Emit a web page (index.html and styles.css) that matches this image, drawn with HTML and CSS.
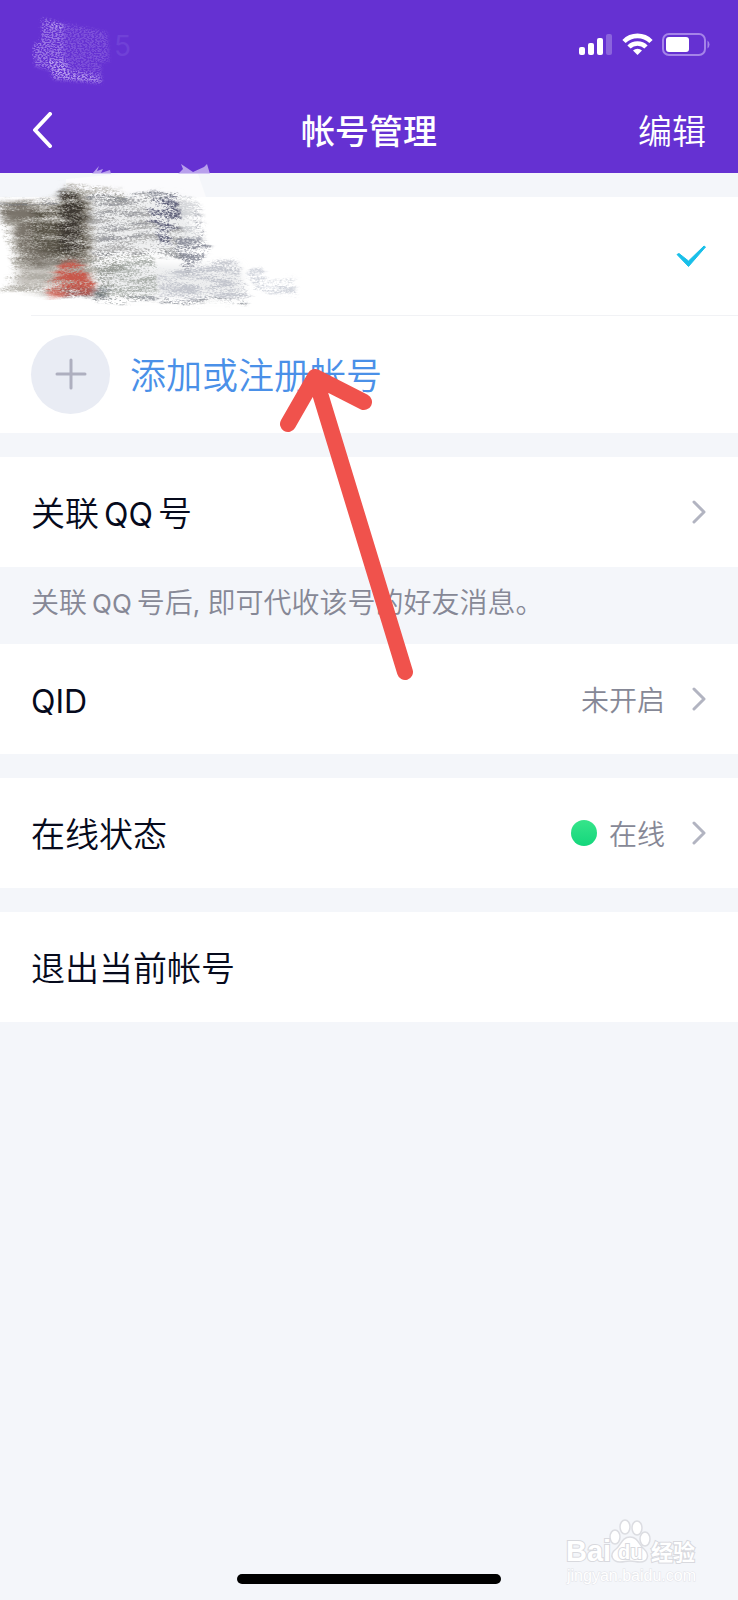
FILE: index.html
```html
<!DOCTYPE html>
<html lang="zh-CN">
<head>
<meta charset="utf-8">
<meta name="viewport" content="width=device-width, initial-scale=1">
<title>帐号管理</title>
<link rel="stylesheet" href="styles.css">
</head>
<body>
<div class="screen">
  <header class="header">
    <div class="status">
      <div class="time">
        <svg class="time-smudge" width="80" height="70" viewBox="0 0 80 70" aria-hidden="true">
          <defs>
            <filter id="dust" x="-10%" y="-10%" width="120%" height="120%">
              <feTurbulence type="fractalNoise" baseFrequency="0.5 0.8" numOctaves="3" seed="4" result="n"/>
              <feColorMatrix in="n" type="matrix" values="0 0 0 0 0  0 0 0 0 0  0 0 0 0 0  0 0 0 5 -2" result="g"/>
              <feGaussianBlur in="SourceGraphic" stdDeviation="1.500" result="b"/>
              <feDisplacementMap in="b" in2="n" scale="8" result="d"/>
              <feComposite in="d" in2="g" operator="in"/>
            </filter>
          </defs>
          <g filter="url(#dust)" fill="#cbb5f5">
            <path d="M11 3 76 17 78 46 70 48 70 68 22 64 20 56 3 51 2 29 10 26Z" opacity=".25"/>
            <path d="M11 3 32 9 34 54 70 60 70 68 22 64 18 54 3 50 2 29 10 26Z" opacity=".35"/>
            <path d="M20 8 32 9 30 15 20 12ZM16 45 36 46 38 58 70 63 70 67 24 63Z" opacity=".6"/>
          </g>
        </svg>
        <span class="time-digit">5</span>
      </div>
      <svg class="status-icons" width="132" height="24" viewBox="0 0 132 24" role="img" aria-label="信号、无线网络、电池">
        <g fill="#fff">
          <rect x="0" y="14" width="6" height="8" rx="2"/>
          <rect x="9" y="10" width="6" height="12" rx="2"/>
          <rect x="18" y="5" width="6" height="17" rx="2"/>
          <rect x="27" y="1" width="6" height="21" rx="2" opacity=".25"/>
          <rect x="87" y="4" width="23" height="15" rx="3"/>
        </g>
        <g fill="none" stroke="#fff" stroke-width="4.600">
          <path d="M45 8.500A19 19 0 0 1 72 8.500"/>
          <path d="M50 14A12 12 0 0 1 67 14"/>
        </g>
        <path d="M58.500 22 54 17.600A6.500 6.500 0 0 1 63 17.600Z" fill="#fff"/>
        <rect x="84" y="1" width="42" height="21" rx="6" fill="none" stroke="#a584e8" stroke-width="2"/>
        <path d="M128.500 7.500A5 5 0 0 1 128.500 15.500Z" fill="#a584e8"/>
      </svg>
    </div>
    <nav class="nav">
      <button class="nav-back" type="button" aria-label="返回">
        <svg width="24" height="36" viewBox="0 0 24 36"><path d="M18 2 3 18 18 34" fill="none" stroke="#fff" stroke-width="4" stroke-linecap="round" stroke-linejoin="round"/></svg>
      </button>
      <h1 class="nav-title">帐号管理</h1>
      <button class="nav-edit" type="button">编辑</button>
    </nav>
  </header>

  <main class="main">
    <section class="group">
      <button class="row row-account" type="button" aria-label="当前帐号">
        <svg class="check" width="30" height="24" viewBox="0 0 30 24"><path d="M1 10.500 3 9.500 12.500 17 28 2 29.500 3 12.500 22.500Z" fill="#18bfe9" stroke="#18bfe9" stroke-width="1" stroke-linejoin="round"/></svg>
      </button>
      <button class="row row-add" type="button">
        <span class="add-circle">
          <svg width="32" height="32" viewBox="0 0 32 32"><path d="M16 2V30M2 16H30" stroke="#aeafbf" stroke-width="3" stroke-linecap="round"/></svg>
        </span>
        <span class="add-label">添加或注册帐号</span>
      </button>
    </section>

    <section class="group">
      <button class="row" type="button">
        <span class="label">关联<span class="latin spaced">QQ</span>号</span>
        <svg class="chevron" width="14" height="24" viewBox="0 0 14 24"><path d="M2 2 12 12 2 22"/></svg>
      </button>
    </section>
    <p class="note">关联<span class="latin spaced">QQ</span>号后<span class="latin">, </span>即可代收该号的好友消息。</p>

    <section class="group">
      <button class="row" type="button">
        <span class="label"><span class="latin">QID</span></span>
        <span class="value">未开启</span>
        <svg class="chevron" width="14" height="24" viewBox="0 0 14 24"><path d="M2 2 12 12 2 22"/></svg>
      </button>
    </section>

    <section class="group">
      <button class="row" type="button">
        <span class="label">在线状态</span>
        <span class="value"><span class="dot"></span>在线</span>
        <svg class="chevron" width="14" height="24" viewBox="0 0 14 24"><path d="M2 2 12 12 2 22"/></svg>
      </button>
    </section>

    <section class="group">
      <button class="row" type="button"><span class="label">退出当前帐号</span></button>
    </section>
  </main>

  <footer class="footer"><div class="home-bar"></div></footer>

  <svg class="scribble" width="310" height="165" viewBox="0 0 310 165" aria-hidden="true">
    <defs>
      <filter id="chalk" x="-5%" y="-10%" width="110%" height="120%">
        <feTurbulence type="fractalNoise" baseFrequency="0.4 0.7" numOctaves="3" seed="11" result="n"/>
        <feTurbulence type="fractalNoise" baseFrequency="0.03 0.16" numOctaves="3" seed="5" result="s"/>
        <feComposite in="n" in2="s" operator="arithmetic" k1="0" k2="0.600" k3="0.600" k4="0" result="m"/>
        <feColorMatrix in="m" type="matrix" values="0 0 0 0 0  0 0 0 0 0  0 0 0 0 0  0 0 0 4 -2" result="g"/>
        <feGaussianBlur in="SourceGraphic" stdDeviation="1.500" result="b"/>
        <feDisplacementMap in="b" in2="s" scale="16" xChannelSelector="R" yChannelSelector="G" result="d"/>
        <feComposite in="d" in2="g" operator="in"/>
      </filter>
      <filter id="smear" x="-10%" y="-10%" width="120%" height="120%">
        <feTurbulence type="fractalNoise" baseFrequency="0.4 0.7" numOctaves="3" seed="3" result="n"/>
        <feTurbulence type="fractalNoise" baseFrequency="0.03 0.16" numOctaves="3" seed="8" result="s"/>
        <feComposite in="n" in2="s" operator="arithmetic" k1="0" k2="0.500" k3="0.600" k4="0" result="m"/>
        <feColorMatrix in="m" type="matrix" values="0 0 0 0 0  0 0 0 0 0  0 0 0 0 0  0 0 0 3 -0.900" result="g"/>
        <feGaussianBlur in="SourceGraphic" stdDeviation="3" result="b"/>
        <feDisplacementMap in="b" in2="s" scale="16" xChannelSelector="R" yChannelSelector="G" result="d"/>
        <feComposite in="d" in2="g" operator="in"/>
      </filter>
      <filter id="soft" x="-10%" y="-20%" width="120%" height="140%">
        <feGaussianBlur stdDeviation="4"/>
      </filter>
    </defs>
    <path d="M66 24 120 19 198 19 206 42H66Z" fill="#fff" opacity=".6"/>
    <path d="M92 19 99 11 97 16 103 14 101 18 110 15 111 19ZM178 19 183 14 181 9 193 17 204 12 207 9 210 19Z" fill="#cdbdf2" opacity=".8"/>
    <g filter="url(#soft)">
      <path d="M6 52 60 50 66 36 90 42 92 100 92 136 20 130 16 90Z" fill="#b4b0a8" opacity=".6"/>
      <path d="M90 44 178 42 200 90 180 96 94 98ZM94 108 240 112 244 142 96 140Z" fill="#dcdde0" opacity=".5"/>
    </g>
    <g filter="url(#chalk)">
      <path d="M0 47 58 48 64 30 120 32 125 42 178 40 182 98 125 104 108 140 0 138 14 110 2 70Z" fill="#96938b" opacity=".65"/>
      <path d="M84 42 176 40 200 46 205 90 178 98 92 101Z" fill="#a9aab1" opacity=".45"/>
      <path d="M152 40 176 40 182 68 170 74 172 88 156 92 160 66 150 62Z" fill="#62637c"/>
      <path d="M180 80 200 85 212 95 188 118 176 92ZM196 44 202 84 198 84Z" fill="#8f929e"/>
      <path d="M90 104 155 102 158 140 130 146 94 144 100 126Z" fill="#8f958f" opacity=".7"/>
      <path d="M158 120 188 112 235 104 248 144 162 146Z" fill="#b0b4be" opacity=".7"/>
      <path d="M248 116 262 112 266 126 296 124 296 142 252 136Z" fill="#c2c6d0" opacity=".7"/>
    </g>
    <g filter="url(#smear)">
      <path d="M0 48 60 48 64 40 88 42 94 98 80 108 24 112 14 88 16 68 0 66Z" fill="#79736a"/>
      <path d="M32 56 60 48 66 34 86 44 82 66 92 82 88 100 64 108 32 94Z" fill="#5a5449"/>
      <path d="M61 34 76 36 82 52 84 88 76 100 58 96Z" fill="#3d3931"/>
      <path d="M24 112 50 114 50 138 8 130Z" fill="#b5b0aa" opacity=".6"/>
    </g>
    <g filter="url(#smear)">
      <path d="M60 108 80 104 92 126 94 140 48 138Z" fill="#c8584c"/>
      <path d="M64 137 108 136 108 141 62 141Z" fill="#354049"/>
    </g>
    <g fill="none" filter="url(#chalk)">
      <path d="M0 48H60M90 42 176 40M94 100 182 98M94 144 158 145M162 146 250 146" stroke="#777b83" stroke-width="3"/>
      <path d="M98 50 158 46M98 60 152 58M100 72 152 68M98 84 150 80" stroke="#8f9199" stroke-width="3"/>
    </g>
  </svg>

  <svg class="arrow" width="150" height="320" viewBox="0 0 150 320" aria-hidden="true">
    <path d="M18 63 45 16 94 41M45 16 135 311" fill="none" stroke="#f0524c" stroke-width="16" stroke-linecap="round" stroke-linejoin="round"/>
  </svg>

  <svg class="watermark" width="140" height="68" viewBox="0 0 140 68" role="img" aria-label="Baidu 经验">
    <g fill="#fff" stroke="#dcdde2" stroke-width="1.500">
      <ellipse cx="50" cy="19" rx="5" ry="7"/>
      <ellipse cx="60" cy="9" rx="5" ry="7"/>
      <ellipse cx="72" cy="10" rx="5" ry="7"/>
      <ellipse cx="80" cy="21" rx="5" ry="7"/>
      <path d="M65 19C57 19 56 27 51 31 43 37 48 44 55 44 60 44 60 43 65 43 70 43 70 44 75 44 83 44 85 37 79 31 74 27 73 19 65 19Z"/>
    </g>
    <g class="wm-text">
      <text class="wm-brand" x="1" y="43">Bai</text>
      <text class="wm-du" x="53" y="41">du</text>
      <text class="wm-cn" x="86" y="42">经验</text>
    </g>
    <text class="wm-url" x="2" y="63">jingyan.baidu.com</text>
  </svg>
</div>
</body>
</html>
```
FILE: styles.css
```css
* {
  box-sizing: border-box;
}

body {
  margin: 0;
  background: #f4f6fa;
  color: #060a1c;
  font-family: "Noto Sans CJK SC", sans-serif;
  font-weight: 350;
}

button {
  margin: 0;
  padding: 0;
  border: 0;
  background: none;
  color: inherit;
  font: inherit;
  text-align: left;
  cursor: pointer;
}

svg {
  display: block;
  flex: none;
}

.screen {
  position: relative;
  display: flex;
  flex-direction: column;
  min-height: 100vh;
  overflow: hidden;
}

.header {
  padding: 0 32px;
  background: #6531d2;
  color: #fff;
}

.status {
  display: flex;
  align-items: center;
  justify-content: space-between;
  height: 90px;
}

.time {
  display: flex;
  align-items: center;
  gap: 2px;
  padding-top: 12px;
}

.time-digit {
  padding-bottom: 10px;
  color: #7041d7;
  font: 400 28px/32px "Inter", sans-serif;
}

.status-icons {
  margin-right: -5px;
}

.nav {
  display: grid;
  grid-template-columns: 1fr auto 1fr;
  align-items: center;
  height: 83px;
  padding-bottom: 4px;
}

.nav-title {
  margin: 0;
  font-size: 34px;
  font-weight: 500;
  line-height: 48px;
}

.nav-edit {
  justify-self: end;
  font-size: 34px;
  line-height: 48px;
}

.main {
  display: flex;
  flex-direction: column;
  flex: 1;
}

.group {
  margin-top: 24px;
  background: #fff;
}

.row {
  display: flex;
  align-items: center;
  width: 100%;
  min-height: 110px;
  padding: 0 32px 0 31px;
}

.row-account {
  min-height: 118px;
  justify-content: flex-end;
}

.row-add {
  position: relative;
  min-height: 118px;
  gap: 20px;
}

.row-add::before {
  content: "";
  position: absolute;
  top: 0;
  left: 31px;
  right: 0;
  height: 1px;
  background: #f1f2f5;
}

.add-circle {
  display: grid;
  place-items: center;
  width: 79px;
  height: 79px;
  border-radius: 50%;
  background: #e9ecf4;
}

.add-label {
  padding-bottom: 3px;
  color: #4a90e8;
  font-size: 36px;
  line-height: 48px;
}

.label {
  flex: 1;
  font-size: 34px;
  line-height: 48px;
}

.latin {
  font-family: "Inter", sans-serif;
  font-size: 32px;
  font-weight: 400;
  line-height: 1;
}

.spaced {
  margin: 0 5px;
}

.value {
  display: flex;
  align-items: center;
  gap: 12px;
  margin-right: 27px;
  color: #868896;
  font-size: 28px;
  line-height: 40px;
}

.dot {
  width: 26px;
  height: 26px;
  border-radius: 50%;
  background: linear-gradient(#36e58a, #14d67c);
}

.chevron path {
  fill: none;
  stroke: #b2b4c1;
  stroke-width: 3;
  stroke-linecap: round;
  stroke-linejoin: round;
}

.note {
  margin: 0 0 -24px;
  padding: 14px 31px 23px;
  color: #868896;
  font-size: 28px;
  line-height: 40px;
}

.note .latin {
  font-size: 26px;
  white-space: pre;
}

.footer {
  display: flex;
  justify-content: center;
  padding-bottom: 16px;
}

.home-bar {
  width: 264px;
  height: 10px;
  border-radius: 5px;
  background: #000;
}

.scribble {
  position: absolute;
  top: 155px;
  left: 0;
  pointer-events: none;
}

.arrow {
  position: absolute;
  top: 361px;
  left: 270px;
  pointer-events: none;
}

.watermark {
  position: absolute;
  right: 33px;
  bottom: 14px;
}

.wm-text {
  fill: #fff;
  stroke: #d8d9de;
  stroke-width: 2px;
  paint-order: stroke;
}

.wm-brand {
  font: 700 29px "Liberation Sans", sans-serif;
}

.wm-du {
  font: 700 20px "Liberation Sans", sans-serif;
}

.wm-cn {
  font: 700 22px "Noto Sans CJK SC", sans-serif;
}

.wm-url {
  fill: #fff;
  stroke: #e3e4e9;
  stroke-width: 1px;
  paint-order: stroke;
  font: 400 16px "Liberation Sans", sans-serif;
}
```
